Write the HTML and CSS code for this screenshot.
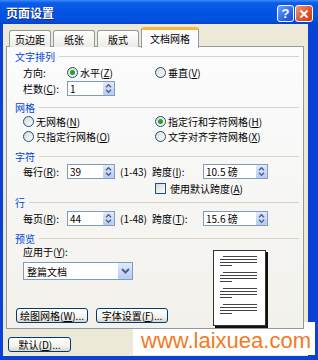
FILE: index.html
```html
<!DOCTYPE html>
<html>
<head>
<meta charset="utf-8">
<link rel="stylesheet" href="styles.css">
</head>
<body>
<div class="window">
  <div class="titlebar">
    <span class="title">页面设置</span>
    <div class="tbtns">
      <span class="tbtn help">?</span>
      <span class="tbtn close"><svg width="10" height="10" viewBox="0 0 10 10"><path d="M1.5 1.5L8.5 8.5M8.5 1.5L1.5 8.5" stroke="#fff" stroke-width="2" fill="none"/></svg></span>
    </div>
  </div>
  <div class="client">
    <div class="tabs">
      <div class="tab t1">页边距</div>
      <div class="tab t2">纸张</div>
      <div class="tab t3">版式</div>
      <div class="tab t4 active">文档网格</div>
    </div>
    <div class="panel">
      <div class="hdr h1">文字排列</div>
      <div class="row r1">
        <span class="lbl">方向:</span>
        <span class="opt colA"><span class="radio on"></span>水平(<u>Z</u>)</span>
        <span class="opt"><span class="radio"></span>垂直(<u>V</u>)</span>
      </div>
      <div class="row">
        <span class="lbl">栏数(<u>C</u>):</span>
        <span class="spin s48"><span class="val">1</span><span class="arrows"><svg width="9" height="11" viewBox="0 0 9 11"><path d="M2 4.2L4.5 1.8L7 4.2M2 6.8L4.5 9.2L7 6.8" stroke="#4d6185" stroke-width="1.4" fill="none"/></svg></span></span>
      </div>
      <div class="hdr h2">网格</div>
      <div class="row rs">
        <span class="opt colW"><span class="radio"></span>无网格(<u>N</u>)</span>
        <span class="opt"><span class="radio on"></span>指定行和字符网格(<u>H</u>)</span>
      </div>
      <div class="row rs">
        <span class="opt colW"><span class="radio"></span>只指定行网格(<u>O</u>)</span>
        <span class="opt"><span class="radio"></span>文字对齐字符网格(<u>X</u>)</span>
      </div>
      <div class="hdr h3">字符</div>
      <div class="row">
        <span class="lbl">每行(<u>R</u>):</span>
        <span class="spin s48"><span class="val">39</span><span class="arrows"><svg width="9" height="11" viewBox="0 0 9 11"><path d="M2 4.2L4.5 1.8L7 4.2M2 6.8L4.5 9.2L7 6.8" stroke="#4d6185" stroke-width="1.4" fill="none"/></svg></span></span>
        <span class="range">(1-43)</span>
        <span class="lbl2">跨度(<u>I</u>):</span>
        <span class="spin s65"><span class="val">10.5 磅</span><span class="arrows"><svg width="9" height="11" viewBox="0 0 9 11"><path d="M2 4.2L4.5 1.8L7 4.2M2 6.8L4.5 9.2L7 6.8" stroke="#4d6185" stroke-width="1.4" fill="none"/></svg></span></span>
      </div>
      <div class="row rc">
        <span class="opt"><span class="chk"></span>使用默认跨度(<u>A</u>)</span>
      </div>
      <div class="hdr">行</div>
      <div class="row r7">
        <span class="lbl">每页(<u>R</u>):</span>
        <span class="spin s48"><span class="val">44</span><span class="arrows"><svg width="9" height="11" viewBox="0 0 9 11"><path d="M2 4.2L4.5 1.8L7 4.2M2 6.8L4.5 9.2L7 6.8" stroke="#4d6185" stroke-width="1.4" fill="none"/></svg></span></span>
        <span class="range">(1-48)</span>
        <span class="lbl2">跨度(<u>T</u>):</span>
        <span class="spin s65"><span class="val">15.6 磅</span><span class="arrows"><svg width="9" height="11" viewBox="0 0 9 11"><path d="M2 4.2L4.5 1.8L7 4.2M2 6.8L4.5 9.2L7 6.8" stroke="#4d6185" stroke-width="1.4" fill="none"/></svg></span></span>
      </div>
      <div class="hdr h5">预览</div>
      <div class="pv">
        <div class="pv-left">
          <div class="apply">应用于(<u>Y</u>):</div>
          <div class="select"><span>整篇文档</span><span class="dd"><svg width="9" height="6" viewBox="0 0 9 6"><path d="M1 1L4.5 4.5L8 1" stroke="#4d6185" stroke-width="2" fill="none"/></svg></span></div>
        </div>
        <div class="page">
          <div class="grp"><i class="l first"></i><i class="l"></i><i class="l"></i><i class="l short"></i></div>
          <div class="grp"><i class="l first"></i><i class="l"></i><i class="l"></i><i class="l short"></i></div>
          <div class="grp"><i class="l first"></i><i class="l"></i><i class="l"></i><i class="l short"></i></div>
          <div class="grp"><i class="l first"></i><i class="l"></i><i class="l"></i><i class="l short"></i></div>
        </div>
        <div class="btns">
          <span class="btn">绘图网格(<u>W</u>)...</span>
          <span class="btn">字体设置(<u>F</u>)...</span>
        </div>
      </div>
    </div>
    <div class="foot">
      <span class="btn bdef">默认(<u>D</u>)...</span>
    </div>
  </div>
  <div class="wm">www.laixuea.com</div>
</div>
</body>
</html>
```
FILE: styles.css
```css
* { box-sizing: border-box; }
html, body { margin: 0; padding: 0; }
body {
  width: 318px;
  height: 360px;
  overflow: hidden;
  font-family: "Noto Sans CJK SC", "Liberation Sans", sans-serif;
  font-size: 10px;
  color: #000;
  background: #fff;
}
u { text-decoration: underline; text-underline-offset: 1px; }

.window {
  position: relative;
  width: 318px;
  height: 360px;
  background: #0a42d6;
  display: flex;
  flex-direction: column;
}
.titlebar {
  height: 24px;
  flex: none;
  display: flex;
  align-items: center;
  padding: 0 5px 0 6px;
  background: linear-gradient(#3a8cf8 0%, #0b5ce8 12%, #0254e2 50%, #0350df 85%, #0442c8 100%);
}
.title {
  flex: 1;
  color: #fff;
  font-weight: bold;
  font-size: 12px;
  line-height: 14px;
  margin-top: 1px;
  text-shadow: 1px 1px 0 #0c2a8a;
}
.tbtns {
  display: flex;
  gap: 1px;
  align-self: flex-start;
  margin-top: 5px;
}
.tbtn {
  width: 17px;
  height: 17px;
  border: 1px solid #fff;
  border-radius: 3px;
  display: flex;
  align-items: center;
  justify-content: center;
  color: #fff;
  font: bold 13px/1 "Liberation Sans", sans-serif;
}
.help { background: linear-gradient(135deg, #6aa5ff, #2360e4 70%, #1a4fd0); }
.close { width: 18px; background: linear-gradient(135deg, #f29a78, #e0502a 60%, #c63d1a); }

.client {
  flex: 1;
  margin: 0 10px 4px 3px;
  background: #ece9d8;
  display: flex;
  flex-direction: column;
}
.tabs {
  display: flex;
  align-items: flex-end;
  height: 20px;
  margin-top: 3px;
  padding-left: 6px;
  position: relative;
  z-index: 2;
}
.tab {
  height: 17px;
  margin-right: 2px;
  border: 1px solid #919b9c;
  border-bottom: none;
  border-radius: 3px 3px 0 0;
  background: linear-gradient(#ffffff, #ecebe5);
  display: flex;
  align-items: center;
  justify-content: center;
}
.t1 { width: 42px; }
.t2 { width: 42px; }
.t3 { width: 42px; }
.t4 { width: 58px; }
.tab.active {
  height: 21px;
  margin-bottom: -1px;
  border-top: 3px solid #f7b843;
  background: #fcfcfe;
  padding-bottom: 1px;
}

.panel {
  margin: -1px 4px 0 3px;
  border: 1px solid #919b9c;
  background: linear-gradient(#fcfcfe, #f2f1eb);
  padding: 2px 4px 2px 8px;
  position: relative;
  z-index: 1;
}
.hdr {
  height: 14px;
  display: flex;
  align-items: center;
  color: #0046d5;
}
.hdr::after {
  content: "";
  flex: 1;
  height: 1px;
  background: #d6d3c3;
  margin-left: 4px;
}
.h2 { margin-top: 4px; }
.h3 { margin-top: 5px; }
.h5 { margin-top: 5px; }

.row {
  display: flex;
  align-items: center;
  height: 16px;
  padding-left: 8px;
}
.r1 { margin-top: 1px; }
.rs { height: 15px; }
.rc { height: 14px; margin-top: 2px; padding-left: 140px; }
.r7 { margin-top: 1px; }
.lbl { width: 44px; flex: none; }
.colA { width: 88px; }
.colW { width: 132px; }
.opt { display: flex; align-items: center; white-space: nowrap; }
.radio {
  width: 11px;
  height: 11px;
  flex: none;
  border-radius: 50%;
  border: 1px solid #1c5180;
  background: linear-gradient(135deg, #d9d7ce, #ffffff);
  margin-right: 2px;
  position: relative;
}
.radio.on::after {
  content: "";
  position: absolute;
  left: 2px;
  top: 2px;
  width: 5px;
  height: 5px;
  border-radius: 50%;
  background: #22a322;
}
.chk {
  width: 11px;
  height: 11px;
  flex: none;
  border: 1px solid #1c5180;
  background: linear-gradient(135deg, #d9d7ce, #ffffff);
  margin-right: 4px;
}
.spin {
  height: 15px;
  flex: none;
  border: 1px solid #7f9db9;
  background: #fff;
  display: flex;
  align-items: center;
  justify-content: space-between;
  padding-left: 2px;
}
.s48 { width: 48px; }
.s65 { width: 65px; }
.arrows {
  width: 11px;
  height: 13px;
  background: linear-gradient(#e1e9fc, #b6caf5);
  border-radius: 1px;
  display: flex;
  align-items: center;
  justify-content: center;
}
.range { width: 32px; margin-left: 5px; flex: none; }
.lbl2 { width: 51px; flex: none; }

.pv {
  display: grid;
  grid-template-columns: 198px auto;
}
.pv-left { grid-column: 1; grid-row: 1; padding-left: 8px; }
.apply { height: 14px; line-height: 14px; }
.select {
  margin-top: 3px;
  width: 110px;
  height: 18px;
  border: 1px solid #7f9db9;
  background: #fff;
  display: flex;
  align-items: center;
  justify-content: space-between;
  padding-left: 3px;
}
.dd {
  width: 14px;
  height: 16px;
  background: linear-gradient(#e1e9fc, #b6caf5);
  border-radius: 1px;
  display: flex;
  align-items: center;
  justify-content: center;
}
.page {
  grid-column: 2;
  grid-row: 1 / span 2;
  margin-top: 5px;
  width: 53px;
  height: 76px;
  border: 1px solid #333;
  background: #fff;
  box-shadow: 2px 2px 0 #111;
  padding: 5px 0 0 6px;
}
.grp { margin-bottom: 6px; }
.l {
  display: block;
  width: 37px;
  height: 1px;
  background: #444;
  margin-bottom: 2px;
}
.l.first { margin-left: 3px; width: 34px; }
.l.short { width: 12px; }
.btns {
  grid-column: 1;
  grid-row: 2;
  align-self: end;
  display: flex;
  gap: 8px;
  margin: 0 0 3px 1px;
}
.btn {
  height: 15px;
  width: 72px;
  border: 1px solid #003c74;
  border-radius: 3px;
  background: linear-gradient(#ffffff, #f3f2ec 60%, #dbd7cb);
  display: flex;
  align-items: center;
  justify-content: center;
  white-space: nowrap;
}
.foot { padding: 8px 0 0 5px; }
.bdef { width: 63px; }

.wm {
  position: absolute;
  left: 133px;
  top: 322px;
  width: 182px;
  height: 33px;
  background: #fff;
  color: #f47a22;
  font: 22px/37px "Liberation Sans", sans-serif;
  padding-left: 8px;
  overflow: hidden;
  white-space: nowrap;
}
```
